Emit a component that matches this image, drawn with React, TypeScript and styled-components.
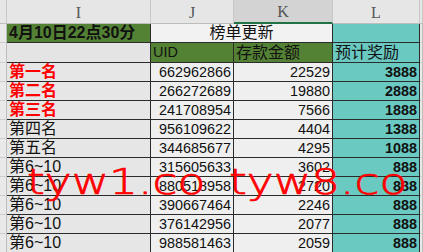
import styled, { createGlobalStyle } from 'styled-components';

const GlobalStyle = createGlobalStyle`
  html, body {
    margin: 0;
    padding: 0;
    background: #ffffff;
    overflow: hidden;
  }
`;

const COLS = '7px 144px 83px 99px 87px 3px';

const GREEN = '#548235';
const TEAL = '#6ac9c1';

type RowData = {
  name: string;
  uid: string;
  amount: string;
  reward: string;
  top?: boolean;
};

const rows: RowData[] = [
  { name: '第一名', uid: '662962866', amount: '22529', reward: '3888', top: true },
  { name: '第二名', uid: '266272689', amount: '19880', reward: '2888', top: true },
  { name: '第三名', uid: '241708954', amount: '7566', reward: '1888', top: true },
  { name: '第四名', uid: '956109622', amount: '4404', reward: '1388' },
  { name: '第五名', uid: '344685677', amount: '4295', reward: '1088' },
  { name: '第6~10', uid: '315605633', amount: '3602', reward: '888' },
  { name: '第6~10', uid: '880518958', amount: '2720', reward: '888' },
  { name: '第6~10', uid: '390667464', amount: '2246', reward: '888' },
  { name: '第6~10', uid: '376142956', amount: '2077', reward: '888' },
  { name: '第6~10', uid: '988581463', amount: '2059', reward: '888' },
];

const App = () => {
  return (
    <Page>
      <GlobalStyle />
      <HeaderRow>
        <HeadCell />
        <HeadCell>I</HeadCell>
        <HeadCell>J</HeadCell>
        <HeadCell $active>K</HeadCell>
        <HeadCell>L</HeadCell>
        <HeadCell />
      </HeaderRow>

      <Row $h={19}>
        <Gutter />
        <Cell $bg={GREEN} $bold>4月10日22点30分</Cell>
        <Cell $bg="#f2f2f2" $span={2} $align="center">榜单更新</Cell>
        <Cell $bg={TEAL} />
        <Gutter />
      </Row>

      <Row $h={20}>
        <Gutter />
        <Cell $bg="#e4e4e4" />
        <Cell $bg={GREEN} $mono>UID</Cell>
        <Cell $bg={GREEN}>存款金额</Cell>
        <Cell $bg={TEAL}>预计奖励</Cell>
        <Gutter />
      </Row>

      {rows.map((r, i) => (
        <Row key={i} $h={19}>
          <Gutter />
          <Cell $bg="#e6e6e6" $color={r.top ? '#ff0000' : '#111'} $bold={r.top}>
            {r.name}
          </Cell>
          <Cell $bg="#efefef" $align="right" $mono>{r.uid}</Cell>
          <Cell $bg="#efefef" $align="right" $mono>{r.amount}</Cell>
          <Cell $bg={TEAL} $align="right" $mono $bold>{r.reward}</Cell>
          <Gutter />
        </Row>
      ))}

      <Watermark $left={27}>tyw1.co</Watermark>
      <Watermark $left={229}>tyw8.co</Watermark>
    </Page>
  );
};
export default App;

const Page = styled.div`
  position: relative;
  width: 423px;
  height: 252px;
  overflow: hidden;
  background: #e6e6e6;
`;

const HeaderRow = styled.div`
  display: grid;
  grid-template-columns: ${COLS};
  height: 24px;
  background: #e6e6e6;
`;

const HeadCell = styled.div<{ $active?: boolean }>`
  box-sizing: border-box;
  display: flex;
  align-items: center;
  justify-content: center;
  background: ${(p) => (p.$active ? '#d3d3d3' : '#e6e6e6')};
  border-right: 1px solid #c8c8c8;
  border-bottom: ${(p) => (p.$active ? '2px solid #217346' : '1px solid #bdbdbd')};
  font-family: 'Liberation Serif', serif;
  font-size: 16px;
  color: #555;
  padding-top: 2px;
`;

const Row = styled.div<{ $h: number }>`
  display: grid;
  grid-template-columns: ${COLS};
  height: ${(p) => p.$h}px;
`;

const Gutter = styled.div`
  box-sizing: border-box;
  background: #e9e9e9;
  border-right: 1px solid #bdbdbd;
  border-bottom: 1px solid #cdcdcd;
`;

const Cell = styled.div<{
  $bg: string;
  $align?: 'left' | 'center' | 'right';
  $color?: string;
  $bold?: boolean;
  $mono?: boolean;
  $span?: number;
}>`
  box-sizing: border-box;
  grid-column: span ${(p) => p.$span ?? 1};
  display: flex;
  align-items: center;
  justify-content: ${(p) =>
    p.$align === 'right' ? 'flex-end' : p.$align === 'center' ? 'center' : 'flex-start'};
  padding: 0 2px;
  background: ${(p) => p.$bg};
  border-right: 1px solid #2b2b2b;
  border-bottom: 1px solid #2b2b2b;
  color: ${(p) => p.$color ?? '#111'};
  font-family: 'Liberation Sans', 'Noto Sans CJK SC', sans-serif;
  font-size: ${(p) => (p.$mono ? '14.4px' : '16px')};
  font-weight: ${(p) => (p.$bold ? 700 : 400)};
  line-height: 1;
  white-space: nowrap;
  overflow: hidden;
`;

const Watermark = styled.div<{ $left: number }>`
  position: absolute;
  top: 165px;
  left: ${(p) => p.$left}px;
  font-family: 'DejaVu Sans', sans-serif;
  font-weight: 200;
  font-size: 35px;
  line-height: 35px;
  color: #ff0000;
  -webkit-text-stroke: 0.7px #ff0000;
  transform: scaleX(1.3);
  transform-origin: left top;
  white-space: nowrap;
  pointer-events: none;
`;
